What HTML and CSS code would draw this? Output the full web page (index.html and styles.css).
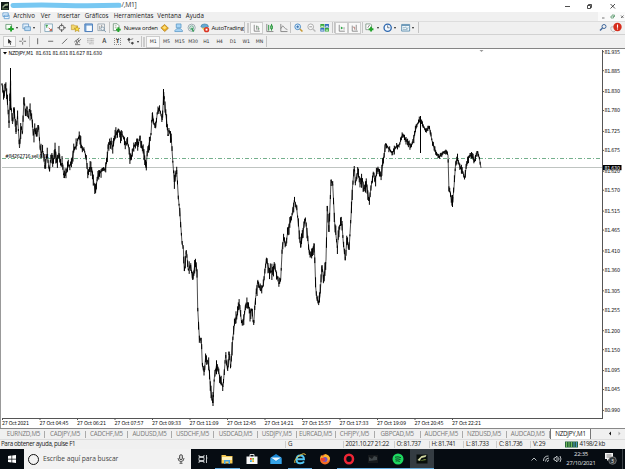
FILE: index.html
```
<!DOCTYPE html>
<html lang="es">
<head>
  <meta charset="UTF-8">
  <title>NZDJPY,M1</title>
  <link rel="stylesheet" href="styles.css">
</head>
<body>
  <header class="titlebar">
    <svg class="app-icon" viewBox="0 0 8 8"><rect width="8" height="8" fill="#111b18"/><path d="M1 5l3-3 3-.5v2L4 4 2 6z" fill="#9aae8c"/><path d="M1 6.8h6" stroke="#58754d"/></svg>
    <svg class="marker" viewBox="0 0 112 7"><path d="M3 3.5Q30 2.8 55 3.4T109 3.2" stroke="#78c8f2" stroke-width="5" stroke-linecap="round" fill="none"/></svg>
    <span class="title">/,M1]</span>
    <svg class="win-buttons" viewBox="0 0 56 10" fill="none" stroke="#222" stroke-width=".8"><path d="M2 5.5h5M47.500 3l4.500 4.500m0-4.500l-4.500 4.500"/><path d="M24.500 4.500h3v3h-3zM25.500 4.500v-1h3v3h-1"/></svg>
  </header>

  <nav class="menu">
    <svg class="menu-icon" viewBox="0 0 9 9"><path d="M1 1h6v4H1zM2.500 3.500H8v4H2.500z" fill="#eef7ff" stroke="#5a9bd0" stroke-width=".9"/></svg>
    <span>Archivo</span><span>Ver</span><span>Insertar</span><span>Gráficos</span><span>Herramientas</span><span>Ventana</span><span>Ayuda</span>
    <svg class="mdi" viewBox="0 0 27 9" fill="none"><path d="M0 0h27v9H0z" fill="#fafafa"/><path d="M4 6h2.500M23 3.500l2.500 2.500m0-2.500L23 6" stroke="#555" stroke-width=".8"/><path d="M13 4h2.500v2H13zM14 3h2.500v2" stroke="#5d9a70" stroke-width=".8"/></svg>
  </nav>

  <div class="toolbar">
    <svg class="ic" viewBox="0 0 10 10"><path d="M1 1.500h6v5H1z" fill="#f4fff4" stroke="#5c8d68" stroke-width=".8"/><path d="M6.500 3.500v5.500M3.700 6.300h5.600" stroke="#24a32c" stroke-width="2"/></svg>
    <i class="drop"></i>
    <svg class="ic gap" viewBox="0 0 10 10"><path d="M1 1h6v5H1z" fill="#e4f1fc" stroke="#5c91c0" stroke-width=".8"/><path d="M3 4h6v4H3z" fill="#bcdcf5" stroke="#5c91c0" stroke-width=".8"/></svg>
    <i class="drop"></i>
    <i class="sep wide"></i>
    <svg class="ic" viewBox="0 0 10 10"><path d="M1 1h8v8H1z" fill="#f6fafc" stroke="#719bb0" stroke-width=".8"/><path d="M3 5V2m-1 1l1-1 1 1" stroke="#2d9b3a" fill="none"/><path d="M5 5l3 3M8 6v2H6" stroke="#c05a41" fill="none"/></svg>
    <svg class="ic" viewBox="0 0 10 10" fill="none" stroke="#555"><circle cx="5" cy="5" r="2.700" stroke-width=".9"/><path d="M5 .5v3M5 6.500v3M.5 5h3M6.500 5h3"/></svg>
    <svg class="ic" viewBox="0 0 10 10"><path d="M.5 2h3l1 1H7v4H.5z" fill="#f3d76c" stroke="#b78d2b" stroke-width=".6"/><path d="M6.500 3.500l1 2h2L8 6.800l.6 2.200-2.100-1.200L4.500 9 5 6.800 3.500 5.500h2z" fill="#ffe03d" stroke="#a98322" stroke-width=".6"/></svg>
    <svg class="ic" viewBox="0 0 10 10"><path d="M1 1h8v8H1z" fill="#f7fbff" stroke="#3f74b4"/><path d="M1 2h8M2 1v8" stroke="#5a8fc9" stroke-width="1.200"/></svg>
    <svg class="ic" viewBox="0 0 10 10" fill="none"><path d="M1 1h7v7H1z" fill="#f4f4f4" stroke="#8c9ba5" stroke-width=".8"/><path d="M3 3v4M5 2v3" stroke="#999"/><circle cx="6" cy="6" r="1.800" stroke="#7895aa" stroke-width=".8"/><path d="M7.500 7.500L9.500 9.500" stroke="#7895aa"/></svg>
    <i class="sep"></i>
    <svg class="ic" viewBox="0 0 10 10"><path d="M1.500 .8h4l2 2V8h-6z" fill="#fff" stroke="#668b70" stroke-width=".8"/><path d="M3 3h2M3 5h2" stroke="#78916d" stroke-width=".7"/><path d="M6.800 4.500v5M4.300 7h5" stroke="#24a32c" stroke-width="2"/></svg>
    <span class="label order">Nueva orden</span>
    <svg class="ic" viewBox="0 0 10 10"><path d="M1 5l4-3.500 4 4L5 9z" fill="#e9ad27" stroke="#a97713" stroke-width=".7"/><path d="M2.500 5L5 3l2 2-2 1.500z" fill="#ffe077"/></svg>
    <svg class="ic" viewBox="0 0 10 10"><path d="M2.500 1h5v4h-5zM1 8l2-2h4l2 2v1H1z" fill="#a7d4f5" stroke="#5796c5" stroke-width=".8"/></svg>
    <svg class="ic" viewBox="0 0 10 10" fill="none"><circle cx="5" cy="5" r="3.800" stroke="#9ca9b0"/><circle cx="5" cy="5" r="2" stroke="#64a98f"/><path d="M5 5l2 4" stroke="#329b55" stroke-width="1.600"/></svg>
    <svg class="ic" viewBox="0 0 10 10"><path d="M1 4q0-3 4-3t4 3L5 6z" fill="#64a9d3" stroke="#39789f" stroke-width=".6"/><path d="M2 5l3 4 2-4z" fill="#efc74a"/><circle cx="7" cy="7" r="2.800" fill="#da3524"/><path d="M6 6h2v2H6z" fill="#fff"/></svg>
    <span class="label auto">AutoTrading</span>
    <i class="sep"></i><i class="grip"></i>
    <svg class="ic on" viewBox="0 0 10 10" fill="none"><path d="M2 1v8h7M5 2v5M7 3v5" stroke="#777"/><path d="M5 3h1M7 6h1.500" stroke="#36a045"/></svg>
    <svg class="ic" viewBox="0 0 10 10" fill="none"><path d="M2 1v8h7" stroke="#888"/><path d="M4 2v6M7 1v7" stroke="#239238"/><path d="M6 3h2v3H6z" fill="#80c98b" stroke="#239238" stroke-width=".8"/></svg>
    <svg class="ic" viewBox="0 0 10 10" fill="none"><path d="M2 1v8h7" stroke="#888"/><path d="M2 6l2-3 3 3 2 1" stroke="#777" stroke-width=".8"/></svg>
    <i class="sep"></i>
    <svg class="ic" viewBox="0 0 10 10" fill="none"><circle cx="4" cy="4" r="3" fill="#ddefff" stroke="#4d8bc4"/><path d="M2.500 4h3M4 2.500v3" stroke="#346fab"/><path d="M6.300 6.300L9 9" stroke="#c79932" stroke-width="1.600"/></svg>
    <svg class="ic" viewBox="0 0 10 10" fill="none"><circle cx="4" cy="4" r="3" fill="#fafafa" stroke="#aaa"/><path d="M2.500 4h3" stroke="#999"/><path d="M6.300 6.300L9 9" stroke="#bbb" stroke-width="1.500"/></svg>
    <svg class="ic" viewBox="0 0 10 10"><path d="M.5 1h4.200v3.800H.5zM5.300 5.200h4.200V9H5.300z" fill="#36a83c"/><path d="M5.300 1h4.200v3.800H5.300zM.5 5.200h4.200V9H.5z" fill="#326fbd"/><path d="M1.300 3.500h2.600M6.100 3.500h2.600M1.300 7.500h2.600M6.100 7.500h2.600" stroke="#f0fff0"/></svg>
    <i class="sep"></i><i class="sep flat"></i>
    <svg class="ic on" viewBox="0 0 10 10" fill="none"><path d="M2 1v8h7" stroke="#777"/><path d="M4 3v4l3-2z" fill="#2fa747"/><path d="M8 4v3" stroke="#888"/></svg>
    <svg class="ic on" viewBox="0 0 10 10" fill="none"><path d="M2 2v7h7M7 1v7" stroke="#777"/><path d="M3 4h2v3" stroke="#ae6c64"/></svg>
    <i class="sep"></i>
    <svg class="ic" viewBox="0 0 10 10"><path d="M1 1h5l1 1v5H1z" fill="#fff" stroke="#728c79" stroke-width=".8"/><path d="M3 5l2-3" stroke="#666" stroke-width=".8"/><path d="M6.500 4v5M4 6.500h5" stroke="#24a32c" stroke-width="2"/></svg>
    <i class="drop"></i>
    <svg class="ic gap" viewBox="0 0 10 10" fill="none"><circle cx="5" cy="5" r="3.800" fill="#f2f8ff" stroke="#2e68af" stroke-width="1.400"/><path d="M5 2.500V5h2" stroke="#456" stroke-width=".8"/></svg>
    <i class="drop"></i>
    <svg class="ic gap" viewBox="0 0 10 10" fill="none"><path d="M.8 1.500h8.400v7H.8z" fill="#eff8fc" stroke="#5688ac" stroke-width=".9"/><path d="M1 2.500h8" stroke="#5688ac"/><path d="M2 5h2l1-1 1 2 2-1M2 7h5" stroke="#7b9db4" stroke-width=".8"/></svg>
    <i class="drop"></i>
    <i class="sep end"></i>
    <svg class="alerts" viewBox="0 0 24 12" fill="none"><circle cx="5" cy="4.500" r="2" stroke="#42699c"/><path d="M3.500 6L1 8.500" stroke="#42699c" stroke-width="1.400"/><path d="M12 5q4-2 6 2l-3 3q-4-1-3-5" fill="#eee" stroke="#aaa" stroke-width=".7"/><circle cx="18.500" cy="5" r="4.200" fill="#d62d1c"/><path d="M18.500 2.500v3.300M18.500 6.500v1" stroke="#fff" stroke-width="1.100"/></svg>
  </div>

  <div class="toolbar drawing">
    <svg class="ic on" viewBox="0 0 10 10"><path d="M3 1l5 4.500H5.800L7 8.500l-1.200.5-1.200-3L3 7.500z" fill="#222"/></svg>
    <svg class="ic" viewBox="0 0 10 10"><path d="M5 1v3M5 6v3M1 5h3M6 5h3" stroke="#555" stroke-width=".9"/></svg>
    <i class="sep line"></i>
    <svg class="ic" viewBox="0 0 10 10"><path d="M5 1.500v7" stroke="#555"/></svg>
    <svg class="ic" viewBox="0 0 10 10"><path d="M2 5h6" stroke="#555"/></svg>
    <svg class="ic" viewBox="0 0 10 10"><path d="M2 8l6-6" stroke="#555"/></svg>
    <svg class="ic" viewBox="0 0 10 10"><path d="M1 6l6-5M2 8.500l7-6M3 4l2 4M5 2.500l2 4M2 9h6" stroke="#555" stroke-width=".9"/></svg>
    <svg class="ic" viewBox="0 0 10 10"><path d="M1 2h8M1 4h8M1 6h8M3 8h6" stroke="#777" stroke-width=".7" stroke-dasharray="1 .5"/></svg>
    <span class="ic glyph">A</span>
    <span class="ic glyph"><b class="tbox">T</b></span>
    <svg class="ic" viewBox="0 0 10 10"><path d="M1 3l2-2 2 2-2 2zM5 7l2-1.500L9 7 7 9z" fill="#444"/><path d="M3 5l1 2M5 3l3-1" stroke="#555" stroke-width=".8"/></svg>
    <i class="drop"></i>
    <i class="sep wide"></i><i class="grip"></i>
    <span class="tf on">M1</span><span class="tf">M5</span><span class="tf">M15</span><span class="tf">M30</span><span class="tf">H1</span><span class="tf">H4</span><span class="tf">D1</span><span class="tf">W1</span><span class="tf">MN</span>
    <i class="sep flat"></i>
  </div>

  <main class="chart">
    <svg id="chart" width="625" height="380" viewBox="0 48 625 380">
      <path class="level" d="M2 167.500H602"/>
      <path class="order-line" d="M2 158.500H602"/>
      <text class="small" x="5" y="158" textLength="44">#84262716 sell 0.01</text>
      <g id="bars"></g>
      <path class="frame" d="M602.500 50V418.500M2 418.500H603"/>
      <g id="axes"></g>
      <path d="M603 165h18.500v5.200H603z"/>
      <text class="small now" x="604.500" y="169.600" textLength="15.500">81.630</text>
      <path d="M479.500 50h4l-2 2z" fill="#999"/>
      <path d="M3 52h4l-2 2.500z"/>
      <text class="small" x="8.500" y="55.200" textLength="93.500" xml:space="preserve">NZDJPY,M1  81.631 81.631 81.627 81.630</text>
    </svg>
  </main>

  <div class="tabs">
    <span>EURNZD,M5</span><span>CADJPY,M5</span><span>CADCHF,M5</span><span>AUDUSD,M5</span><span>USDCHF,M5</span><span>USDCAD,M5</span><span>USDJPY,M5</span><span>EURCAD,M5</span><span>CHFJPY,M5</span><span>GBPCAD,M5</span><span>AUDCHF,M5</span><span>NZDUSD,M5</span><span>AUDCAD,M5</span><span class="active">NZDJPY,M1</span>
    <svg viewBox="0 0 16 8"><path d="M4 1.500v4L2 3.500z" fill="#111"/><path d="M11.500 1.500v4l2-2z" fill="#aaa"/></svg>
  </div>

  <footer class="status">
    <span class="help">Para obtener ayuda, pulse F1</span><span>G</span><span>2021.10.27 21:22</span><span>O: 81.737</span><span>H: 81.741</span><span>L: 81.733</span><span>C: 81.736</span><span>V: 29</span>
    <svg viewBox="0 0 14 7"><path d="M0 .5h13v6H0z" fill="#27643c"/><path d="M1.500 1v5M4 1v5M6.500 1v5" stroke="#74bd5b"/><path d="M9 1v5M11.500 1v5" stroke="#4a91c3"/></svg>
    <span class="net">4198/2 kb</span>
  </footer>

  <div class="taskbar">
    <div class="start"><svg viewBox="0 0 8 8"><path d="M0 1l3.500-.5v3.200H0zM4.200.4L8 0v3.700H4.200zM0 4.400h3.500v3.200L0 7.100zM4.200 4.400H8V8l-3.800-.4z" fill="#fff"/></svg></div>
    <div class="search">
      <i class="cortana"></i><span>Escribe aquí para buscar</span>
      <svg viewBox="0 0 8 10" fill="none" stroke="#444" stroke-width=".9"><rect x="2.500" y=".7" width="3" height="5" rx="1.500" fill="#ccc"/><path d="M1 4q0 3.500 3 3.500T7 4M4 7.500V9M2.500 9.300h3"/></svg>
    </div>
    <div class="app"><svg viewBox="0 0 12 12" fill="none" stroke="#d5d8da" stroke-width=".9"><path d="M2 2v1.500h5V2M2 10V8.500h5V10M2 4.500h5v3H2zM9.500 2v8M9 5h1.500"/></svg></div>
    <div class="app open"><svg viewBox="0 0 12 12"><path d="M.5 2h4l1 1h6v7.500H.5z" fill="#f4c852"/><path d="M1 4h10v3H1z" fill="#fff2bd"/><path d="M3 7h6v4H7.500V8.500h-3V11H3z" fill="#49a7e3"/></svg></div>
    <div class="app"><svg viewBox="0 0 12 12"><path d="M4 4V1.500h4V4" fill="none" stroke="#ddd"/><path d="M.5 3.500h11V11H.5z" fill="#f7f7f7"/><path d="M4 5h1.800v1.800H4z" fill="#e65128"/><path d="M6.200 5H8v1.800H6.200z" fill="#7fba2b"/><path d="M4 7.200h1.800V9H4z" fill="#2ca5df"/><path d="M6.200 7.200H8V9H6.200z" fill="#efb51b"/></svg></div>
    <div class="app"><svg viewBox="0 0 12 12"><path d="M.5 4.500L6 1l5.500 3.500V11H.5z" fill="#1785d2"/><path d="M1 4.500h10L6 8z" fill="#e9f6ff"/><path d="M.5 11V5L6 8.500 11.500 5v6z" fill="#36a4e8"/></svg></div>
    <div class="app open"><svg viewBox="0 0 12 12" fill="none"><path d="M3 6.300h7Q10 2.500 6.300 2.500T2.500 6.500t4 3.800Q9 10.300 10 8.500" stroke="#53c6f2" stroke-width="1.900"/><path d="M1 10Q-.5 7 5 3t6.500-1" stroke="#eec642"/></svg></div>
    <div class="app"><svg viewBox="0 0 12 12"><circle cx="6" cy="6.500" r="5" fill="#f36b25"/><path d="M1 6L2 2l2 2 2-3q5 1 5 5L8 9z" fill="#ffb42d"/><circle cx="6" cy="6.500" r="2.500" fill="#7954c2"/><path d="M1.500 5Q5 4 6 6t-2 2Q1.500 8 1.500 5" fill="#ee412f"/></svg></div>
    <div class="app open"><svg viewBox="0 0 12 12"><ellipse cx="6" cy="6" rx="4" ry="4.300" fill="none" stroke="#ee2635" stroke-width="2.500"/></svg></div>
    <div class="app open"><svg viewBox="0 0 12 12"><path d="M1 2h10v8H1z" fill="#15191c"/><path d="M2 8V4l3 2 2-3 3 1v3z" fill="#3f4649"/></svg></div>
    <div class="app open"><svg viewBox="0 0 12 12" fill="none"><circle cx="6" cy="6" r="5.500" fill="#1ed760"/><path d="M3 4.200q3-1 6 .5M3.300 6.200q2.700-.8 5.200.4M3.600 8q2.200-.6 4.200.4" stroke="#10351e" stroke-width=".9"/></svg></div>
    <div class="app open current"><svg viewBox="0 0 12 12"><path d="M.5 1.500h11v9H.5z" fill="#090f0c"/><path d="M1.500 7l4-4 5-1-1 2-4 1-2 3z" fill="#d3d8a2"/><path d="M3 8l6-2 1.500 1z" fill="#7e9b43"/></svg></div>
    <svg class="tray" viewBox="0 0 32 12" fill="none" stroke="#ccd0d3" stroke-width=".9"><path d="M1.500 7.500L4 5l2.500 2.500"/><path d="M13.500 8q0-5 5-5M15.500 8.500q0-3.500 3.500-3.500M17.500 9q0-2 1.500-2"/><path d="M24 5h1l2-2v6l-2-2h-1zM28.500 4.500q1 1.500 0 3M30 3q2 3 0 6"/></svg>
    <div class="clock"><span>22:35</span><span>27/10/2021</span></div>
    <svg class="notes" viewBox="0 0 14 14"><path d="M1 1h8v6H5L3 9V7H1z" fill="#f3f3f3"/><path d="M2.500 3h5M2.500 5h5" stroke="#555" stroke-width=".7"/><circle cx="8.500" cy="8.500" r="3.800" fill="#30363a" stroke="#999" stroke-width=".6"/><text x="7.100" y="10.500" fill="#fff">3</text></svg>
    <i class="desktop"></i>
  </div>
  <script src="chart.js"></script>
</body>
</html>
```
FILE: styles.css
```
* { box-sizing: border-box; }
body {
  margin: 0;
  width: 625px;
  height: 469px;
  overflow: hidden;
  display: flex;
  flex-direction: column;
  background: #f0f0f0;
  color: #222;
  font-family: "Open Sans", "Noto Sans", sans-serif;
  font-size: 6.2px;
  line-height: 1;
  white-space: nowrap;
}
svg { display: block; flex: none; }
.titlebar {
  height: 11.5px;
  flex: none;
  display: flex;
  align-items: center;
  background: #fff;
}
.app-icon { width: 8px; height: 8px; margin-left: 1px; }
.marker { width: 112px; height: 7px; margin-left: 1px; }
.title { font-size: 6.8px; letter-spacing: -.3px; margin-left: -.5px; color: #333; }
.win-buttons { width: 56px; height: 10px; margin-left: auto; margin-right: 6px; }

.menu {
  height: 10px;
  flex: none;
  display: grid;
  grid-template-columns: 11px 27.500px 16.500px 27.500px 29px 43.500px 28.500px 1fr 27px;
  align-items: center;
  padding-left: 2.300px;
  border-bottom: 1px solid #ddd;
}
.menu-icon { width: 8px; height: 8px; }
.mdi { width: 27px; height: 9px; }

.toolbar {
  height: 13.500px;
  flex: none;
  display: flex;
  align-items: center;
  padding-left: 2.500px;
  border-bottom: 1px solid #d2d2d2;
}
.ic {
  width: 13.300px;
  height: 9.500px;
  flex: none;
}
.gap { margin-left: 2.100px; }
.on {
  height: 12px;
  padding: 1px 0;
  background: #f9f9f9;
  border: .5px solid #ccc;
}
.drop {
  border: 1.500px solid transparent;
  border-top: 2px solid #222;
  border-bottom: 0;
}
.gap + .drop { margin-right: .8px; }
.sep {
  width: 1px;
  height: 11px;
  margin: 0 .5px;
  background: #c4c4c4;
}
.sep.wide { margin: 0 .5px 0 4.500px; }
.sep.flat { margin: 0; }
.sep.line { margin: 0 1px 0 0; }
.sep.end { margin-left: 2.500px; }
.grip {
  width: 2px;
  height: 10px;
  margin: 0 1px;
  border: solid #ccc;
  border-width: 0 .5px;
}
.order { width: 34.500px; }
.auto { width: 32.500px; }
.label { color: #111; font-size: 6px; letter-spacing: -.2px; }
.alerts { width: 24px; height: 12px; margin-left: auto; margin-right: 2px; }
.drawing { border-bottom: 0; height: 13px; }
.drawing .ic { height: 8.500px; width: 13.300px; }
.drawing .ic.on { height: 11.500px; }
.drawing .sep.wide { margin: 0 0 0 2px; }
.glyph {
  display: flex;
  align-items: center;
  justify-content: center;
  font-weight: 600;
  color: #444;
}
.tbox { border: 1px dotted #888; font-size: 5.500px; padding: 0 1px; }
.tf {
  width: 13.300px;
  text-align: center;
  font: 4.700px "DejaVu Sans", sans-serif;
  letter-spacing: -.1px;
  color: #333;
}
.tf.on { padding-top: 2.500px; }

.chart {
  height: 380px;
  flex: none;
  background: #fff;
  border-top: 1.500px solid #858585;
  border-left: 1.500px solid #999;
}
#chart { margin: -1.500px 0 0 -1.500px; }
.small {
  font: 5.400px "DejaVu Sans Condensed", "DejaVu Sans", sans-serif;
  fill: #111;
}
.now { fill: #fff; }
.level { stroke: #bfc4c1; }
.order-line { stroke: #65a780; stroke-dasharray: 4 2 1 2; stroke-width: .9; }
.frame { stroke: #555; fill: none; }
.bar { stroke: #000; stroke-width: 1; fill: none; }
.trace { stroke: #222; stroke-width: .8; fill: none; }

.tabs {
  height: 11px;
  flex: none;
  display: grid;
  grid-template-columns: 45px 41px 42px 44px 42px 44px 38.500px 39px 39px 46.500px 41.500px 44px 43.500px 41px 1fr;
  align-items: center;
  border-top: 1px solid #888;
  color: #777;
  letter-spacing: -.2px;
}
.tabs span {
  height: 7px;
  border-right: 1px solid #aaa;
  text-align: center;
}
.tabs span:first-child { padding-left: 3px; }
.tabs .active {
  height: 10.500px;
  padding-top: 2px;
  background: #fff;
  color: #111;
  border: 1px solid #777;
  border-top: 0;
}
.tabs svg { width: 16px; height: 8px; margin-left: 16px; }
.status {
  height: 10px;
  flex: none;
  display: grid;
  grid-template-columns: 285px 57.500px 51px 35px 34.500px 33px 34px 34.500px 14px 1fr;
  align-items: center;
  border-top: 1px solid #ddd;
  letter-spacing: -.35px;
}
.status span { padding-left: 2px; border-left: 1px solid #ccc; }
.status .help { padding-left: 1px; border: 0; letter-spacing: -.35px; }
.status .net { border: 0; padding-left: 1px; }
.status svg { width: 14px; height: 7px; }

.taskbar {
  height: 20px;
  flex: none;
  display: flex;
  align-items: center;
  background: #060c12;
  color: #e2e4e6;
}
.start { width: 23.500px; padding-left: 8px; }
.start svg { width: 8px; height: 8px; }
.search {
  width: 167.500px;
  height: 20px;
  display: flex;
  align-items: center;
  background: #f2f2f2;
  color: #444;
  font-size: 6.700px;
}
.search span { margin-left: 4.500px; letter-spacing: -.05px; }
.search svg { width: 8px; height: 10px; margin-left: auto; margin-right: 6px; }
.cortana {
  width: 11px;
  height: 11px;
  margin-left: 4px;
  border: 1.500px solid #111;
  border-radius: 50%;
}
.app {
  width: 24.300px;
  height: 20px;
  display: flex;
  align-items: center;
  justify-content: center;
  border-bottom: 1px solid transparent;
}
.app svg { width: 12px; height: 12px; }
.open { border-bottom-color: #66aee0; }
.current { background: #343c42; }
.tray { width: 32px; height: 12px; margin-left: auto; }
.clock {
  width: 38px;
  display: flex;
  flex-direction: column;
  align-items: center;
  gap: 3px;
  font-size: 5.900px;
  letter-spacing: -.2px;
}
.notes { width: 14px; height: 14px; margin: 0 4px; }
.notes text { font-size: 5px; }
.desktop {
  width: 3px;
  height: 20px;
  border-left: 1px solid #3c4348;
}
```
FILE: chart.js
```
// price path, x / y pairs
const points = [
  2,84, 4,98, 5,84, 7,97, 9,123, 10.5,80, 11,105, 12.5,124, 14,107, 16,132, 17.5,116, 19.5,148, 21,127, 22.5,133,
  24,97, 25.5,116, 27,107, 28.5,117, 29.5,109, 31.5,116, 33.5,135, 35,128, 36.5,136, 38.5,125, 40,148, 41.5,153,
  43,151, 45,168, 47,154, 49.5,171, 51,155, 53,164, 55,149, 57,162, 59,153, 61,165, 62.5,163, 64,178, 66,173,
  68,165, 70,166, 72,160, 74,149, 76,147, 77.5,140, 79.5,135, 81,145, 82.5,150, 84,149, 86,157, 88,174, 90,167,
  92,170, 94,184, 95.5,192, 97,180, 99,173, 101,172, 103,168, 105,170, 107,160, 108.5,143, 111,143, 113,147,
  115,136, 117,132, 118.5,129, 120,135, 122,134, 124,139, 126,144, 127.5,143, 129,148, 130.5,159, 132,155,
  134,145, 135.5,147, 137,139, 138,147, 140,136, 141.5,147, 143.5,150, 145,160, 146,168, 147,156, 149,144,
  151,134, 152.3,113, 154,124, 155.7,127, 157.3,113, 159,108, 160.7,113, 162.3,120, 163.7,92, 165.3,110,
  167.3,127, 168,136, 169,130, 171.3,139, 172.7,160, 174.3,182, 176.7,170, 178.3,197, 180,214, 182,243,
  183.3,247, 184.3,271, 186.3,250, 188.3,270, 190.7,265, 192.7,280, 195.3,261, 197,271, 197.7,308, 199.5,340,
  201.3,338, 202.3,365, 204.3,372, 205.7,356, 209,367, 210.7,390, 213,403, 214.3,378, 216.7,364, 219.3,375,
  221,382, 223,387, 225.7,355, 227.7,371, 229,352, 230.7,367, 232.7,340, 234.3,325, 236.7,317, 239.3,304,
  241.7,323, 243.7,320, 245.7,304, 248.3,304, 250,313, 251.5,309, 253.7,325, 255,303, 257.7,281, 260.7,291,
  263.3,285, 266.3,259, 269.3,271, 272,272, 274.3,264, 276.7,275, 279,284, 280.7,280, 282.3,247, 284,237,
  285.7,246, 288.3,228, 291.7,217, 294.3,200, 296.7,208, 299,230, 300.7,247, 303.3,230, 305.3,219, 307.7,237,
  309.3,253, 311,256, 314.3,244, 315.7,287, 316.7,298, 318.7,303, 320,296, 322,265, 323.7,282, 326,260,
  327.3,206, 329,232, 331,180, 332.7,184, 334.7,223, 337.3,248, 339.3,226, 342,224, 343.3,243, 345.3,260,
  347,238, 349,250, 351,217, 352.3,190, 354.3,166, 355.3,183, 357.7,173, 360,180, 362,179, 364,191, 366,181,
  369,201, 371.7,183, 373.3,173, 375,181, 377.7,168, 379.5,171, 381,177, 383.3,160, 385.7,144, 388.3,148,
  392.3,153, 396,147, 399.3,145, 402.7,134, 405.7,140, 408.3,142, 411,147, 414,137, 416.7,125, 420.3,120,
  423.3,126, 426,131, 429.3,127, 432.3,142, 435.7,152, 439,157, 442.7,153, 446,151, 448,155, 449,192, 450,191,
  452.3,205, 454,187, 455.7,162, 457.7,159, 460,167, 462.7,172, 464.7,178, 466.7,163, 469,156, 471.7,155,
  474.3,162, 477.3,151, 479.3,158, 481,168
];

let seed = 7;
function rnd() {
  seed = (seed * 16807) % 2147483647;
  return seed / 2147483647;
}

let trace = "M" + points[0] + " " + points[1];
let bars = "";
let i = 0;
for (let x = 2; x <= 480.5; x += 0.78) {
  while (i < points.length - 4 && points[i + 2] < x) i += 2;
  const k = (x - points[i]) / (points[i + 2] - points[i]);
  const y = points[i + 1] + (points[i + 3] - points[i + 1]) * k;
  const spread = x > 383 ? 5.5 : 9;
  bars += `M${x.toFixed(2)} ${(y - 0.8 - rnd() * rnd() * spread).toFixed(1)}V${(y + 0.8 + rnd() * rnd() * spread).toFixed(1)}`;
}
for (let n = 2; n < points.length; n += 2) trace += "L" + points[n] + " " + points[n + 1];
// long wicks
bars += "M10.5 68V110M420.500 116V153M452.500 195V207M163.500 89V105M213 392V406";
document.getElementById("bars").innerHTML = `<path class="trace" d="${trace}"/><path class="bar" d="${bars}"/>`;

const prices = ["81.935", "81.885", "81.830", "81.780", "81.725", "81.675", "81.620", "81.570", "81.515", "81.465",
  "81.410", "81.360", "81.305", "81.255", "81.200", "81.150", "81.095", "81.045", "80.990"];
const times = ["27 Oct 2021", "27 Oct 04:45", "27 Oct 06:21", "27 Oct 07:57", "27 Oct 09:33", "27 Oct 11:09",
  "27 Oct 12:45", "27 Oct 14:21", "27 Oct 15:57", "27 Oct 17:33", "27 Oct 19:09", "27 Oct 20:45", "27 Oct 22:21"];
let axes = "";
prices.forEach((p, n) => {
  const y = 51.7 + (81.935 - p) * 379.6;
  axes += `<path class="frame" d="M602 ${y}h2"/><text class="small" x="604.5" y="${y + 1.9}" textLength="15.5">${p}</text>`;
});
times.forEach((t, n) => {
  const x = 2 + n * 37.5;
  axes += `<path class="frame" d="M${x + 0.5} 418v2"/><text class="small" x="${x}" y="424.800" textLength="${n ? 29 : 27}">${t}</text>`;
});
document.getElementById("axes").innerHTML = axes;
```
